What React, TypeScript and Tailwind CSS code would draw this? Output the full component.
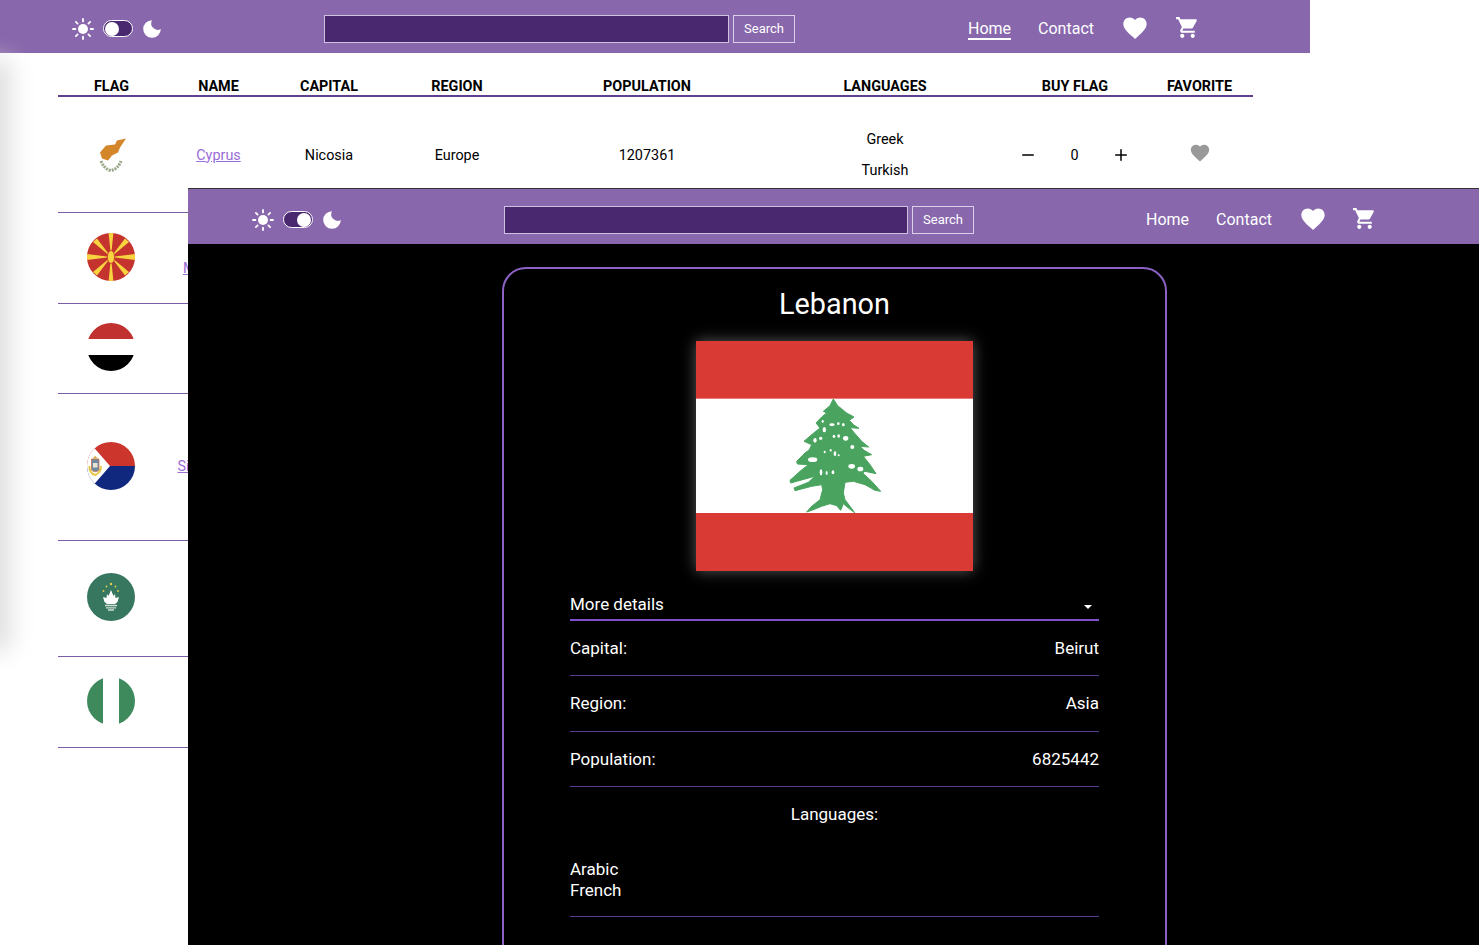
import React from 'react';
import { Minus, Plus } from 'lucide-react';
import { MdFavorite, MdShoppingCart } from 'react-icons/md';

function SunIcon() {
  return (
    <svg viewBox="0 0 22 22" className="w-[22px] h-[22px]" fill="#fff">
      <circle cx="11" cy="11" r="5" />
      <g stroke="#fff" strokeWidth="1.8" strokeLinecap="round">
        <path d="M11 1v2.4M11 18.6V21M1 11h2.4M18.6 11H21M3.9 3.9l1.7 1.7M16.4 16.4l1.7 1.7M3.9 18.1l1.7-1.7M16.4 5.6l1.7-1.7" />
      </g>
    </svg>
  );
}

function MoonIcon() {
  return (
    <svg viewBox="0 0 20 20" className="w-5 h-5" fill="#fff">
      <path d="M10 1.2A8.8 8.8 0 1 0 18.8 10 6.5 6.5 0 0 1 10 1.2Z" />
    </svg>
  );
}

function Navbar({ dark, activeHome }: { dark?: boolean; activeHome?: boolean }) {
  return (
    <nav
      className={`flex items-center h-[53px] pt-[4px] bg-[#8867ac] text-white font-['Roboto',sans-serif] ${
        dark ? 'pl-[64px]' : 'pl-[72px]'
      }`}
    >
      <div className="flex items-center justify-between w-[90px]">
        <SunIcon />
        <div
          className={`flex items-center w-[30px] h-[17px] px-[1px] rounded-full border border-white bg-[#4a2870] ${
            dark ? 'justify-end' : 'justify-start'
          }`}
        >
          <div className="w-[14px] h-[14px] rounded-full bg-white" />
        </div>
        <MoonIcon />
      </div>
      <div className="flex items-center gap-[4px] ml-[162px]">
        <div className={`h-[28px] bg-[#4a2870] border border-[#cfc2de] ${dark ? 'w-[404px]' : 'w-[405px]'}`} />
        <button className="w-[62px] h-[28px] border border-[#d9cfe6] text-[13px] text-white">Search</button>
      </div>
      <div className={`flex items-center text-base ${dark ? 'ml-[172px]' : 'ml-[173px]'}`}>
        <a className={`mt-[2px] border-b-2 leading-[18px] ${activeHome ? 'border-white' : 'border-transparent'}`}>Home</a>
        <a className="ml-[27px] mt-[2px] border-b-2 border-transparent leading-[18px]">Contact</a>
        <MdFavorite className="ml-[27px] w-[28px] h-[28px] -mt-[2px]" />
        <MdShoppingCart className={`w-[25px] h-[25px] -mt-[2px] ${dark ? 'ml-[25px]' : 'ml-[26px]'}`} />
      </div>
    </nav>
  );
}

function FlagCyprus() {
  return (
    <svg viewBox="0 0 48 48" className="w-12 h-12">
      <path fill="#d4862b" d="M13 23.5 19 16.5 28 15.5 30 11.5 39 9.5 33 18.5 31 23.5 25 26.5 21 31.5 15 29.5Z" />
      <path d="M14 32Q17 40 24 41.5 31 40 34 32" fill="none" stroke="#98a485" strokeWidth="3" strokeDasharray="2 1" />
    </svg>
  );
}

function FlagMacedonia() {
  return (
    <svg viewBox="0 0 48 48" className="w-12 h-12 rounded-full">
      <rect width="48" height="48" fill="#c5332e" />
      <g fill="#f7d33f">
        <path d="M24 24 21.6 0h4.8ZM24 24 21.6 48h4.8ZM24 24 0 21h0v6ZM24 24 48 21v6Z" />
        <path d="M24 24 6 9l4-3.5ZM24 24 42 9l-4-3.5ZM24 24 6 39l4 3.5ZM24 24 42 39l-4 3.5Z" />
        <ellipse cx="24" cy="24" rx="3.6" ry="6.4" stroke="#c5332e" strokeWidth="0.8" />
      </g>
    </svg>
  );
}

function FlagYemen() {
  return (
    <svg viewBox="0 0 48 48" className="w-12 h-12 rounded-full">
      <rect width="48" height="16" fill="#c1312f" />
      <rect y="16" width="48" height="16" fill="#fff" />
      <rect y="32" width="48" height="16" fill="#000" />
    </svg>
  );
}

function FlagSintMaarten() {
  return (
    <svg viewBox="0 0 48 48" className="w-12 h-12 rounded-full overflow-hidden">
      <rect width="48" height="24" fill="#cb352c" />
      <rect y="24" width="48" height="24" fill="#11287f" />
      <path d="M23 24 3 1H-4v46h7Z" fill="#fff" />
      <path d="M2.5 24Q2 31 8 33 14 31 14 24" fill="none" stroke="#e8c84a" strokeWidth="2" />
      <path d="M4.5 17h7.5v11q-3.7 3.5-7.5 0Z" fill="#6f8aa0" stroke="#c9683e" strokeWidth="0.7" />
      <rect x="6" y="21" width="4.5" height="4.5" fill="#e9e4d4" />
      <path d="M5.5 16.5 8.2 14l2.8 2.5Z" fill="#d9a63c" />
    </svg>
  );
}

function FlagMacao() {
  return (
    <svg viewBox="0 0 48 48" className="w-12 h-12 rounded-full">
      <rect width="48" height="48" fill="#38775f" />
      <path d="M24 17 26.5 23 28 21 28.5 25 32 24 30.5 29 28 31h-8L17.5 29 16 24 19.5 25 20 21 21.5 23Z" fill="#fff" />
      <path d="M18 32.5h12M19 34.8h10M21 37h6" stroke="#cfe0d6" strokeWidth="1.3" />
      <g fill="#e4cf4f">
        <circle cx="24" cy="11" r="1.2" />
        <circle cx="19.5" cy="13.5" r="0.9" />
        <circle cx="28.5" cy="13.5" r="0.9" />
        <circle cx="16.5" cy="18" r="0.9" />
        <circle cx="31" cy="18" r="0.9" />
      </g>
    </svg>
  );
}

function FlagNigeria() {
  return (
    <svg viewBox="0 0 48 48" className="w-12 h-12 rounded-full">
      <rect width="16" height="48" fill="#3f8a5d" />
      <rect x="16" width="16" height="48" fill="#fff" />
      <rect x="32" width="16" height="48" fill="#3f8a5d" />
    </svg>
  );
}

const gridCols = 'grid grid-cols-[107px_107px_114px_142px_238px_238px_142px_107px]';

const covered = [
  { flag: <FlagMacedonia />, name: 'North Macedonia', height: 'h-[91px]' },
  { flag: <FlagYemen />, name: 'Yemen', height: 'h-[90px]' },
  { flag: <FlagSintMaarten />, name: 'Sint Maarten', height: 'h-[147px]' },
  { flag: <FlagMacao />, name: 'Macao', height: 'h-[116px]' },
  { flag: <FlagNigeria />, name: 'Nigeria', height: 'h-[91px]' },
];

function BackWindow() {
  return (
    <div className="w-[1310px]">
      <Navbar activeHome />
      <div className="ml-[58px] w-[1195px] text-[14.4px] text-black">
        <div className={`${gridCols} items-end h-[44px] leading-[16px] border-b-2 border-[#5f3f8f] font-bold text-center`}>
          <div>FLAG</div>
          <div>NAME</div>
          <div>CAPITAL</div>
          <div>REGION</div>
          <div>POPULATION</div>
          <div>LANGUAGES</div>
          <div>BUY FLAG</div>
          <div>FAVORITE</div>
        </div>
        <div className={`${gridCols} items-center h-[116px] pt-[2px] border-b border-[#7a5ea5] text-center`}>
          <div className="flex justify-center pr-[1px] mb-[6px]">
            <FlagCyprus />
          </div>
          <a className="text-[#9b6dd6] underline">Cyprus</a>
          <div>Nicosia</div>
          <div>Europe</div>
          <div>1207361</div>
          <div className="flex flex-col gap-[10px] leading-[21px] mb-[1px]">
            <span>Greek</span>
            <span>Turkish</span>
          </div>
          <div className="flex items-center justify-center gap-[33px] pr-[1px]">
            <Minus size={18} />
            <span>0</span>
            <Plus size={18} />
          </div>
          <div className="flex justify-center mb-[6px]">
            <MdFavorite className="w-[22px] h-[22px] text-[#999999]" />
          </div>
        </div>
        {covered.map((row) => (
          <div key={row.name} className={`${gridCols} items-center ${row.height} border-b border-[#7a5ea5] text-center`}>
            <div className="flex justify-center pr-[1px] mb-[3px]">{row.flag}</div>
            <a className="text-[#9b6dd6] underline">{row.name}</a>
          </div>
        ))}
      </div>
    </div>
  );
}

function DetailRow({ label, value }: { label: string; value: string }) {
  return (
    <div className="flex items-center justify-between h-[55.33px] pt-[1px] border-b border-[#5d3a92]">
      <span>{label}</span>
      <span>{value}</span>
    </div>
  );
}

function LebanonFlag() {
  const holes = [
    [405, 332, 5, 7], [422, 326, 5, 5], [433, 300, 5, 8], [456, 285, 8, 4], [475, 282, 4, 4], [490, 285, 4, 5],
    [428, 275, 3, 5], [462, 320, 4, 5], [476, 319, 4, 5], [497, 326, 8, 7], [517, 352, 6, 6], [434, 367, 3, 4],
    [452, 362, 3, 4], [465, 372, 4, 7], [476, 377, 3, 3], [398, 390, 14, 7], [423, 428, 4, 9], [440, 430, 3, 6],
    [459, 428, 4, 6], [515, 410, 10, 7], [541, 418, 9, 7],
  ];
  return (
    <svg
      viewBox="48 34 831 690"
      className="w-[277px] h-[230px] shadow-[0_0_14px_rgba(255,255,255,0.35)]"
      preserveAspectRatio="none"
    >
      <rect x="48" y="34" width="831" height="690" fill="#da3a34" />
      <rect x="48" y="207" width="831" height="343" fill="#fff" />
      <path
        fill="#4aa45f"
        stroke="#4aa45f"
        strokeWidth="3"
        strokeLinejoin="round"
        d="M460 208 473 228 488 240 500 250 522 262 508 272 520 285 537 296 510 294 525 312 545 335 566 352 540 350 552 362 575 375 550 380 570 405 588 432 555 425 548 430 575 455 602 485 585 482 555 465 520 455 495 458 490 490 495 510 510 530 524 549 505 535 490 522 482 542 470 528 450 522 425 530 400 540 380 547 395 530 420 510 428 480 425 465 395 470 345 483 342 475 385 458 405 440 375 448 332 460 330 452 360 425 385 405 352 403 350 395 375 370 388 360 395 345 372 335 395 315 420 295 408 280 425 262 440 250 430 245 450 228Z"
      />
      {holes.map(([cx, cy, rx, ry]) => (
        <ellipse key={`${cx}-${cy}`} cx={cx} cy={cy} rx={rx} ry={ry} fill="#fff" />
      ))}
    </svg>
  );
}

function FrontWindow() {
  return (
    <div className="absolute left-[188px] top-[188px] right-0 bottom-0 overflow-hidden bg-black border-t border-[#333333]">
      <div className="h-[55px] bg-[#8867ac] pt-[2px]">
        <Navbar dark />
      </div>
      <div className="ml-[314px] mt-[23px] w-[665px] h-[720px] border-2 border-[#8c62c4] rounded-[24px] text-white">
        <h1 className="flex items-center justify-center h-[72px] text-[28.8px]">Lebanon</h1>
        <div className="flex justify-center">
          <LebanonFlag />
        </div>
        <div className="mx-[66px] mt-[20px] text-[17px]">
          <div className="flex items-center justify-between h-[30px] pb-[1px] border-b-2 border-[#7f4fc9]">
            <span>More details</span>
            <span className="w-0 h-0 mr-[7px] mt-[5px] border-x-[4px] border-x-transparent border-t-[4px] border-t-white" />
          </div>
          <DetailRow label="Capital:" value="Beirut" />
          <DetailRow label="Region:" value="Asia" />
          <DetailRow label="Population:" value="6825442" />
          <div className="flex items-center justify-center h-[55px]">Languages:</div>
          <div className="pt-[17px] pb-[15px] border-b border-[#5d3a92] leading-[21px]">
            <div>Arabic</div>
            <div>French</div>
          </div>
        </div>
      </div>
    </div>
  );
}

export default function App() {
  return (
    <div className="relative w-[1479px] h-[945px] overflow-hidden bg-white font-['Roboto',sans-serif]">
      <BackWindow />
      <div className="absolute -left-[20px] top-[60px] w-[30px] h-[590px] bg-[#dddddd] blur-[12px]" />
      <FrontWindow />
    </div>
  );
}
